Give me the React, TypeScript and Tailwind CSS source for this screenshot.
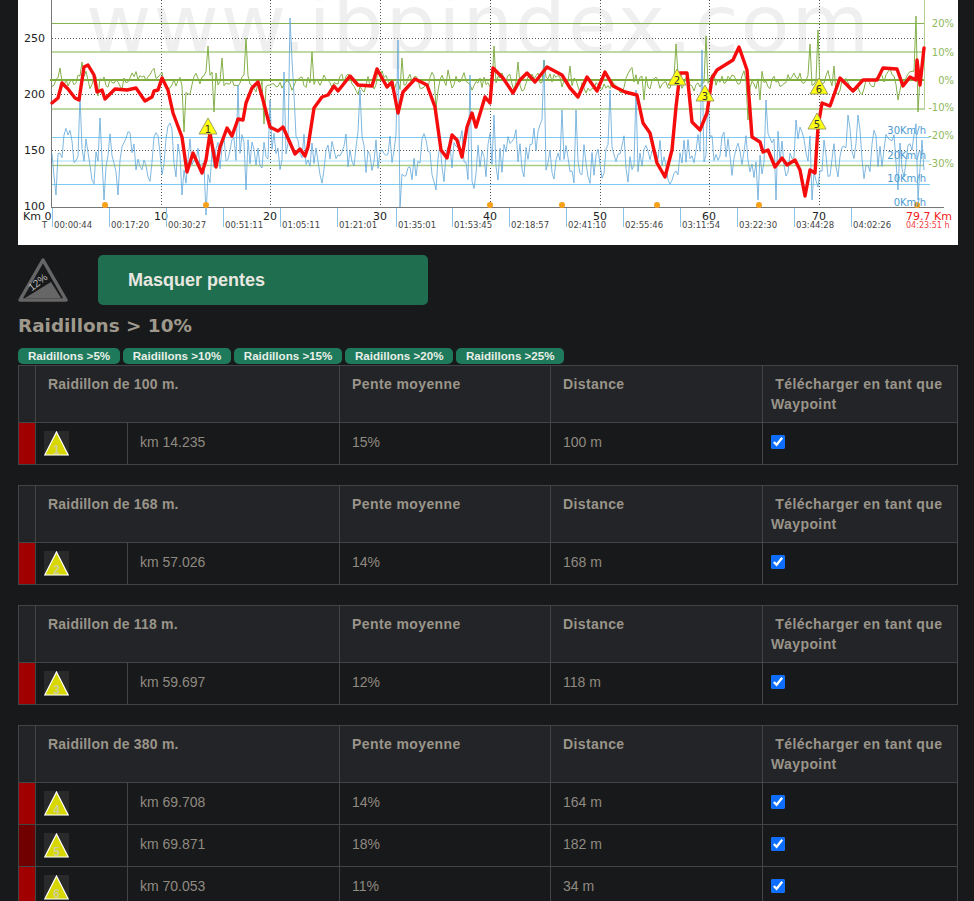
const red: [number, number][] = [
  [52,103],[58,98],[62,83],[68,89],[75,98],[79,100],[84,67],[88,65],[94,75],[97,92],[102,90],[105,99],[115,89],[127,90],[136,88],[145,101],[152,97],[154,91],[158,90],[162,78],[168,90],[173,113],[182,137],[187,172],[193,153],[197,162],[202,173],[206,160],[210,133],[216,167],[220,147],[227,128],[232,136],[238,119],[243,120],[246,103],[252,88],[258,82],[263,100],[270,127],[278,131],[283,127],[295,154],[300,149],[305,156],[308,147],[314,108],[322,97],[328,95],[334,86],[338,91],[350,76],[358,85],[372,86],[377,69],[387,87],[392,82],[398,113],[403,92],[415,79],[427,85],[435,107],[441,150],[447,158],[452,135],[457,140],[462,157],[467,127],[472,113],[476,127],[485,97],[490,103],[493,68],[503,78],[513,93],[520,80],[527,73],[535,82],[547,67],[562,75],[570,88],[578,97],[587,77],[597,91],[605,72],[613,86],[625,92],[637,95],[643,123],[650,133],[657,163],[665,177],[672,150],[676,107],[680,73],[687,73],[692,122],[700,130],[707,113],[712,78],[717,70],[733,60],[739,47],[747,70],[752,137],[760,142],[763,152],[768,150],[775,167],[782,158],[787,165],[795,160],[800,170],[805,196],[810,170],[815,173],[818,127],[822,103],[830,106],[840,78],[853,91],[863,80],[877,80],[883,68],[897,69],[903,86],[910,77],[916,80],[917,60],[920,85],[924,48],
];

// pseudo random trace, spikes override the value at their x
function trace(seed: number, base: number, amp: number, keep: number, step: number, spikes: Record<number, number>) {
  let s = seed;
  let prev = base;
  const pts: string[] = [];
  for (let x = 52; x <= 924; x += step) {
    s = (s * 16807) % 2147483647;
    const r = (s % 1000) / 1000 - 0.5;
    prev = base + (prev - base) * keep + r * amp;
    const y = spikes[x] ?? prev;
    pts.push(`${x},${y.toFixed(1)}`);
  }
  return pts.join(" ");
}

const greenSpikes: Record<number, number> = {
  60: 68, 82: 62, 98: 96, 184: 132, 208: 46, 214: 112, 222: 58, 246: 38, 264: 124, 312: 52, 378: 68, 402: 58, 436: 108, 448: 70, 494: 46, 518: 62, 544: 60, 570: 66, 644: 100, 676: 44, 706: 36, 748: 120, 760: 100, 810: 44, 818: 30, 834: 66, 898: 100, 916: 16, 918: 112, 924: 55,
};
const blueSpikes: Record<number, number> = {
  80: 95, 56: 195, 100: 118, 104: 200, 118: 195, 182: 195, 206: 215, 238: 85, 246: 190, 270: 100, 284: 72, 290: 18, 292: 60, 294: 95, 360: 90, 398: 40, 400: 207, 436: 190, 470: 75, 494: 115, 544: 60, 562: 110, 576: 110, 610: 90, 636: 90, 657: 200, 702: 50, 708: 90, 758: 200, 766: 100, 776: 200, 796: 120, 812: 200, 824: 140, 848: 115, 858: 115, 898: 190, 918: 200, 922: 140,
};

const timeTicks = ["00:00:44","00:17:20","00:30:27","00:51:11","01:05:11","01:21:01","01:35:01","01:53:45","02:18:57","02:41:10","02:55:46","03:11:54","03:22:30","03:44:28","04:02:26"];
const tickX = [52,109,166,223,280,337,396,452,509,566,623,680,737,794,851];
const kmX = [161,270,380,490,600,709,819];
const dots = [105,206,490,562,657,759,917];
const markers: [number, number, string][] = [[208,118,"1"],[677,69,"2"],[705,85,"3"],[817,113,"5"],[819,78,"6"]];

function Chart() {
  return (
    <svg width="940" height="245" viewBox="18 0 940 245" className="block bg-white" style={{ fontFamily: "'DejaVu Sans', sans-serif" }}>
      <text x="86" y="52" fontSize="80" fill="#efefef" letterSpacing="2">www.ibpindex.com</text>
      {[38.5, 94.5, 150.5].map((y) => (
        <line key={y} x1="52" x2="924" y1={y} y2={y} stroke="#555" strokeDasharray="1 2" />
      ))}
      {kmX.map((x) => (
        <line key={x} x1={x + 0.5} x2={x + 0.5} y1="0" y2="207" stroke="#555" strokeDasharray="1 2" />
      ))}
      <line x1="51.5" x2="51.5" y1="0" y2="207" stroke="#777" />
      <line x1="924.5" x2="924.5" y1="0" y2="110" stroke="#b5d196" />
      <line x1="52" x2="924" y1="23.5" y2="23.5" stroke="#86b350" />
      <line x1="52" x2="924" y1="52" y2="52" stroke="#a9cc85" strokeWidth="1.5" />
      <line x1="50" x2="924" y1="80" y2="80" stroke="#7fae3c" strokeWidth="2" />
      <line x1="52" x2="924" y1="109" y2="109" stroke="#a9cc85" strokeWidth="1.5" />
      <line x1="52" x2="924" y1="165.5" y2="165.5" stroke="#a9cc85" strokeWidth="1.5" />
      <line x1="52" x2="930" y1="137.5" y2="137.5" stroke="#7ccbf0" />
      <line x1="52" x2="930" y1="161" y2="161" stroke="#a5dcf5" />
      <line x1="52" x2="930" y1="184.5" y2="184.5" stroke="#7ccbf0" />
      <polyline points={trace(4711, 82, 16, 0.55, 2, greenSpikes)} fill="none" stroke="#84b04a" strokeWidth="1" />
      <polyline points={trace(90210, 155, 44, 0.45, 2, blueSpikes)} fill="none" stroke="#5fa6d8" strokeWidth="0.8" />
      <polyline points={red.map((p) => p.join(",")).join(" ")} fill="none" stroke="#f50d0d" strokeWidth="3.4" strokeLinejoin="round" strokeLinecap="round" />
      <line x1="51" x2="944" y1="207.5" y2="207.5" stroke="#777" />
      {dots.map((x) => (
        <circle key={x} cx={x} cy="205" r="3" fill="#f7a11a" />
      ))}
      {markers.map(([x, y, n]) => (
        <g key={n}>
          <polygon points={`${x},${y} ${x + 9},${y + 16} ${x - 9},${y + 16}`} fill="#ffff14" stroke="#8a8a60" strokeWidth="0.8" />
          <text x={x} y={y + 15} fontSize="10" textAnchor="middle" fill="#333">{n}</text>
        </g>
      ))}
      <g fontSize="11" fill="#222">
        <text x="24" y="42">250</text>
        <text x="24" y="98">200</text>
        <text x="24" y="154">150</text>
        <text x="24" y="210">100</text>
        <text x="23" y="220">Km 0</text>
        {["10","20","30","40","50","60","70"].map((t, i) => (
          <text key={t} x={kmX[i]} y="220" textAnchor="middle">{t}</text>
        ))}
      </g>
      <text x="42" y="228" fontSize="8.5" fill="#444">T</text>
      {timeTicks.map((t, i) => (
        <g key={t}>
          <line x1={tickX[i] + 0.5} x2={tickX[i] + 0.5} y1="208" y2="227" stroke="#8cc4e8" />
          <text x={tickX[i] + 2} y="228" fontSize="8.5" fill="#444">{t}</text>
        </g>
      ))}
      <g fontSize="10" fill="#8fb85c" textAnchor="end">
        <text x="954" y="27">20%</text>
        <text x="954" y="56">10%</text>
        <text x="954" y="84">0%</text>
        <text x="954" y="111">-10%</text>
        <text x="954" y="139">-20%</text>
        <text x="954" y="167">-30%</text>
      </g>
      <g fontSize="10" fill="#4d9ad0" textAnchor="end">
        <text x="926" y="134">30Km/h</text>
        <text x="926" y="159">20Km/h</text>
        <text x="926" y="182">10Km/h</text>
        <text x="926" y="206">0Km/h</text>
      </g>
      <text x="906" y="220" fontSize="11" fill="#f01818">79.7 Km</text>
      <text x="906" y="228" fontSize="8" fill="#f04444">04:23:51 h</text>
    </svg>
  );
}

function SlopeIcon() {
  return (
    <svg width="50" height="46" viewBox="0 0 50 46" className="mt-[2px] shrink-0">
      <polygon points="25,3 48,43 2,43" fill="#18191b" stroke="#666" strokeWidth="3.5" strokeLinejoin="round" />
      <polygon points="7,41 43,41 33,25" fill="#666" />
      <text x="22" y="28" fontSize="10.5" fill="#b8b8b8" transform="rotate(-38 22 28)" textAnchor="middle" fontFamily="'Liberation Sans', sans-serif">12%</text>
    </svg>
  );
}

function Marker({ n }: { n: number }) {
  return (
    <svg width="25" height="25" viewBox="0 0 25 25" className="block">
      <rect width="25" height="25" fill="#2a2a2a" />
      <polygon points="12.5,1 24.2,24 0.8,24" fill="#d8d800" stroke="#fff" strokeWidth="1.2" />
      <text x="12.5" y="22.5" fontSize="12" fontWeight="700" textAnchor="middle" fill="#cfcf9a" fontFamily="'Liberation Sans', sans-serif">{n}</text>
    </svg>
  );
}

interface Row {
  n: number;
  km: string;
  slope: string;
  dist: string;
  color?: string;
}

const sections: { title: string; rows: Row[] }[] = [
  { title: "Raidillon de 100 m.", rows: [{ n: 1, km: "km 14.235", slope: "15%", dist: "100 m" }] },
  { title: "Raidillon de 168 m.", rows: [{ n: 2, km: "km 57.026", slope: "14%", dist: "168 m" }] },
  { title: "Raidillon de 118 m.", rows: [{ n: 3, km: "km 59.697", slope: "12%", dist: "118 m" }] },
  {
    title: "Raidillon de 380 m.",
    rows: [
      { n: 4, km: "km 69.708", slope: "14%", dist: "164 m" },
      { n: 5, km: "km 69.871", slope: "18%", dist: "182 m", color: "bg-[#700000]" },
      { n: 6, km: "km 70.053", slope: "11%", dist: "34 m" },
    ],
  },
];

const pills = ["Raidillons >5%", "Raidillons >10%", "Raidillons >15%", "Raidillons >20%", "Raidillons >25%"];
const th = "border border-[#434446] px-3 pt-[8px] pb-2 text-left align-top text-[14px] font-bold leading-[20px] tracking-[0.4px]";
const td = "border border-[#434446] px-3 pb-[3px] text-[14px] align-middle";

function SlopeTable({ title, rows }: { title: string; rows: Row[] }) {
  return (
    <table className="mb-5 w-[939px] table-fixed border-collapse text-[#9a958a]">
      <colgroup>
        <col className="w-[17px]" />
        <col className="w-[92px]" />
        <col className="w-[212px]" />
        <col className="w-[211px]" />
        <col className="w-[212px]" />
        <col className="w-[195px]" />
      </colgroup>
      <thead>
        <tr className="h-[57px] bg-[#232427]">
          <th className={th}></th>
          <th colSpan={2} className={`${th} !tracking-[0.2px]`}>{title}</th>
          <th className={th}>Pente moyenne</th>
          <th className={th}>Distance</th>
          <th className={`${th} !pl-2`}>&nbsp;Télécharger en tant que Waypoint</th>
        </tr>
      </thead>
      <tbody>
        {rows.map((r) => (
          <tr key={r.n} className="h-[42px] text-[#8f8a80]">
            <td className={`border border-[#434446] ${r.color ?? "bg-[#a00000]"}`}></td>
            <td className="border border-[#434446] pl-2 align-middle"><Marker n={r.n} /></td>
            <td className={td}>{r.km}</td>
            <td className={td}>{r.slope}</td>
            <td className={td}>{r.dist}</td>
            <td className="border border-[#434446] pl-2 align-middle">
              <input type="checkbox" defaultChecked className="mb-[4px] block h-[14px] w-[14px] accent-[#0d6efd]" />
            </td>
          </tr>
        ))}
      </tbody>
    </table>
  );
}

export default function App() {
  return (
    <div className="h-screen overflow-hidden bg-[#18191b] pl-[18px] font-['Liberation_Sans',Arial,sans-serif]">
      <Chart />
      <div className="mt-[10px] flex items-start">
        <SlopeIcon />
        <button className="ml-[30px] h-[50px] w-[330px] rounded-[5px] bg-[#1f6e50] pl-[30px] text-left text-[18px] font-bold text-[#e8e8e0]">
          Masquer pentes
        </button>
      </div>
      <h2 className="mt-[8px] h-[25px] font-['DejaVu_Sans',sans-serif] text-[18.4px] font-bold leading-[25px] text-[#9f998d]">
        Raidillons &gt; 10%
      </h2>
      <div className="mt-[10px] flex h-[17px] gap-[3px]">
        {pills.map((p) => (
          <span key={p} className="h-[16px] rounded-[5px] bg-[#1f7a5c] pl-[10px] pr-[9.5px] text-[11.6px] font-bold leading-[16px] text-[#e8efe8]">
            {p}
          </span>
        ))}
      </div>
      {sections.map((s) => (
        <SlopeTable key={s.title} title={s.title} rows={s.rows} />
      ))}
    </div>
  );
}
